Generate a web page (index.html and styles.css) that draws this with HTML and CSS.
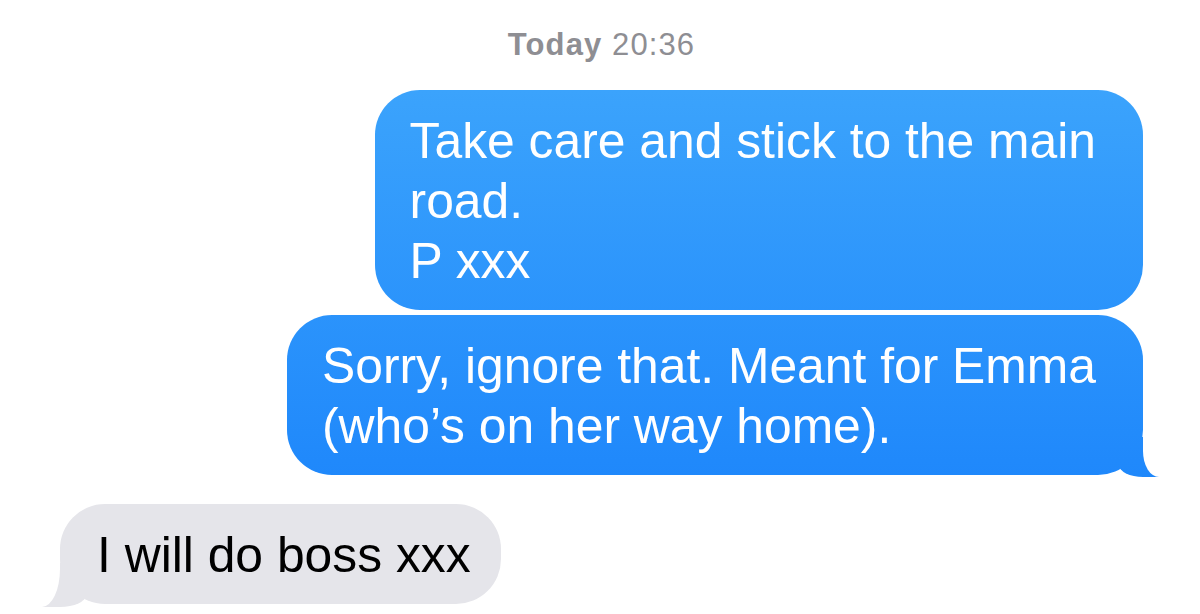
FILE: index.html
```html
<html>
<head>
    <title>Messages</title>
    <meta charset="UTF-8" name="viewport" content="width=device-width, initial-scale=1">
    <link rel="stylesheet" href="styles.css">
</head>

<body>
    <div class="thread">
        <p class="stamp"><b>Today</b> 20:36</p>

        <div class="bubble sent">
            Take care and stick to the main<br>
            road.<br>
            P xxx
        </div>
        <div class="bubble sent last">
            Sorry, ignore that. Meant for Emma<br>
            (who’s on her way home).
        </div>

        <div class="bubble received last">
            I will do boss xxx
        </div>
    </div>
</body>
</html>
```

FILE: styles.css
```css
html {
    background-color: white;
}

body {
    margin: 0;
    font-family: "Liberation Sans", Arial, sans-serif;
}

.thread {
    display: flex;
    flex-direction: column;
    align-items: flex-end;
    padding: 27px 57px 0 60px;
}

.stamp {
    align-self: center;
    margin: 0 0 27px 0;
    font-size: 31px;
    line-height: 36px;
    letter-spacing: 1.1px;
    color: #8e8e93;
}

.stamp b {
    font-weight: bold;
}

.bubble {
    position: relative;
    font-size: 49.8px;
    line-height: 60px;
    padding: 21px 47px 19px 35px;
    border-radius: 45px;
    white-space: nowrap;
}

.sent {
    color: white;
    background: linear-gradient(#3ba3fc 90px, #1f88fb 475px) fixed;
    margin-bottom: 5px;
}

.sent.last::before {
    content: "";
    position: absolute;
    right: -16px;
    bottom: -2px;
    width: 40px;
    height: 40px;
    background: linear-gradient(#3ba3fc 90px, #1f88fb 475px) fixed;
    border-bottom-left-radius: 24px 12px;
}

.sent.last::after {
    content: "";
    position: absolute;
    right: -16px;
    bottom: -2px;
    width: 16px;
    height: 40px;
    background: white;
    border-bottom-left-radius: 16px 26px;
}

.received {
    align-self: flex-start;
    margin-top: 24px;
    padding: 21px 30px 19px 37px;
    color: black;
    background-color: #e5e5ea;
}

.received.last::before {
    content: "";
    position: absolute;
    left: -18px;
    bottom: -3px;
    width: 44px;
    height: 44px;
    background-color: #e5e5ea;
    border-bottom-right-radius: 26px 12px;
}

.received.last::after {
    content: "";
    position: absolute;
    left: -18px;
    bottom: -3px;
    width: 18px;
    height: 44px;
    background: white;
    border-bottom-right-radius: 18px 38px;
}
```
